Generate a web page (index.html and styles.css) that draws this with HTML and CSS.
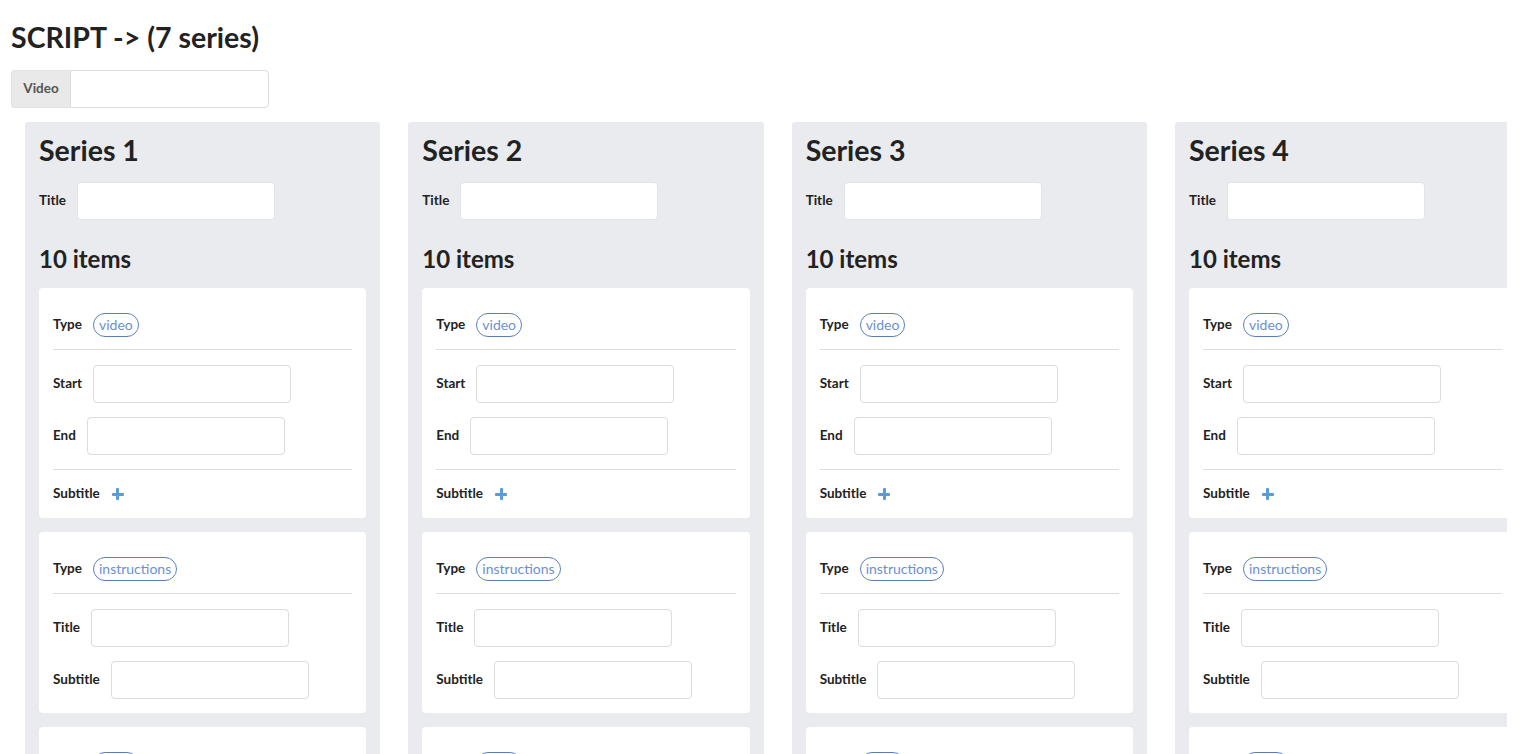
FILE: index.html
```html
<!DOCTYPE html>
<html lang="en">
<head>
<meta charset="utf-8">
<title>Script</title>
<link rel="stylesheet" href="styles.css">
</head>
<body>
<main class="page">
  <h1 class="page-title">SCRIPT -&gt; (7 series)</h1>
  <div class="input-group">
    <span class="addon">Video</span>
    <input class="text-input group-input" type="text">
  </div>

  <div class="series-scroll">
    <section class="series">
      <h2 class="series-title">Series 1</h2>
      <div class="field"><label class="label">Title</label><input class="text-input" type="text"></div>
      <h3 class="items-count">10 items</h3>
      <div class="card">
        <div class="type-row"><span class="label">Type</span><span class="pill">video</span></div>
        <div class="fields"><div class="field"><label class="label">Start</label><input class="text-input" type="text"></div><div class="field"><label class="label">End</label><input class="text-input" type="text"></div></div>
        <div class="sub-row"><span class="label">Subtitle</span><span class="plus"></span></div>
      </div>
      <div class="card">
        <div class="type-row"><span class="label">Type</span><span class="pill">instructions</span></div>
        <div class="fields last"><div class="field"><label class="label">Title</label><input class="text-input" type="text"></div><div class="field"><label class="label">Subtitle</label><input class="text-input" type="text"></div></div>
      </div>
      <div class="card">
        <div class="type-row"><span class="label">Type</span><span class="pill">video</span></div>
        <div class="fields"><div class="field"><label class="label">Start</label><input class="text-input" type="text"></div><div class="field"><label class="label">End</label><input class="text-input" type="text"></div></div>
        <div class="sub-row"><span class="label">Subtitle</span><span class="plus"></span></div>
      </div>
    </section>

    <section class="series">
      <h2 class="series-title">Series 2</h2>
      <div class="field"><label class="label">Title</label><input class="text-input" type="text"></div>
      <h3 class="items-count">10 items</h3>
      <div class="card">
        <div class="type-row"><span class="label">Type</span><span class="pill">video</span></div>
        <div class="fields"><div class="field"><label class="label">Start</label><input class="text-input" type="text"></div><div class="field"><label class="label">End</label><input class="text-input" type="text"></div></div>
        <div class="sub-row"><span class="label">Subtitle</span><span class="plus"></span></div>
      </div>
      <div class="card">
        <div class="type-row"><span class="label">Type</span><span class="pill">instructions</span></div>
        <div class="fields last"><div class="field"><label class="label">Title</label><input class="text-input" type="text"></div><div class="field"><label class="label">Subtitle</label><input class="text-input" type="text"></div></div>
      </div>
      <div class="card">
        <div class="type-row"><span class="label">Type</span><span class="pill">video</span></div>
        <div class="fields"><div class="field"><label class="label">Start</label><input class="text-input" type="text"></div><div class="field"><label class="label">End</label><input class="text-input" type="text"></div></div>
        <div class="sub-row"><span class="label">Subtitle</span><span class="plus"></span></div>
      </div>
    </section>

    <section class="series">
      <h2 class="series-title">Series 3</h2>
      <div class="field"><label class="label">Title</label><input class="text-input" type="text"></div>
      <h3 class="items-count">10 items</h3>
      <div class="card">
        <div class="type-row"><span class="label">Type</span><span class="pill">video</span></div>
        <div class="fields"><div class="field"><label class="label">Start</label><input class="text-input" type="text"></div><div class="field"><label class="label">End</label><input class="text-input" type="text"></div></div>
        <div class="sub-row"><span class="label">Subtitle</span><span class="plus"></span></div>
      </div>
      <div class="card">
        <div class="type-row"><span class="label">Type</span><span class="pill">instructions</span></div>
        <div class="fields last"><div class="field"><label class="label">Title</label><input class="text-input" type="text"></div><div class="field"><label class="label">Subtitle</label><input class="text-input" type="text"></div></div>
      </div>
      <div class="card">
        <div class="type-row"><span class="label">Type</span><span class="pill">video</span></div>
        <div class="fields"><div class="field"><label class="label">Start</label><input class="text-input" type="text"></div><div class="field"><label class="label">End</label><input class="text-input" type="text"></div></div>
        <div class="sub-row"><span class="label">Subtitle</span><span class="plus"></span></div>
      </div>
    </section>

    <section class="series">
      <h2 class="series-title">Series 4</h2>
      <div class="field"><label class="label">Title</label><input class="text-input" type="text"></div>
      <h3 class="items-count">10 items</h3>
      <div class="card">
        <div class="type-row"><span class="label">Type</span><span class="pill">video</span></div>
        <div class="fields"><div class="field"><label class="label">Start</label><input class="text-input" type="text"></div><div class="field"><label class="label">End</label><input class="text-input" type="text"></div></div>
        <div class="sub-row"><span class="label">Subtitle</span><span class="plus"></span></div>
      </div>
      <div class="card">
        <div class="type-row"><span class="label">Type</span><span class="pill">instructions</span></div>
        <div class="fields last"><div class="field"><label class="label">Title</label><input class="text-input" type="text"></div><div class="field"><label class="label">Subtitle</label><input class="text-input" type="text"></div></div>
      </div>
      <div class="card">
        <div class="type-row"><span class="label">Type</span><span class="pill">video</span></div>
        <div class="fields"><div class="field"><label class="label">Start</label><input class="text-input" type="text"></div><div class="field"><label class="label">End</label><input class="text-input" type="text"></div></div>
        <div class="sub-row"><span class="label">Subtitle</span><span class="plus"></span></div>
      </div>
    </section>

    <section class="series">
      <h2 class="series-title">Series 5</h2>
      <div class="field"><label class="label">Title</label><input class="text-input" type="text"></div>
      <h3 class="items-count">10 items</h3>
    </section>
  </div>
</main>
</body>
</html>
```

FILE: styles.css
```css
* { box-sizing: border-box; }

html, body {
  margin: 0;
  padding: 0;
  background: #ffffff;
  overflow: hidden;
}

body {
  font-family: "Lato", "Noto Sans", sans-serif;
  color: #222222;
}

.page {
  padding: 0 11px;
  height: 754px;
}

.page-title {
  margin: 0;
  padding-top: 22px;
  font-size: 28.5px;
  line-height: 30px;
  font-weight: 700;
  color: #222222;
}

.input-group {
  margin-top: 18px;
  display: flex;
  width: 258px;
  height: 38px;
}

.addon {
  display: flex;
  align-items: center;
  justify-content: center;
  width: 59px;
  padding-bottom: 3px;
  background: #e9e9e9;
  color: #555555;
  font-size: 13.5px;
  font-weight: 700;
  border: 1px solid #e2e2e2;
  border-right: none;
  border-radius: 4px 0 0 4px;
}

.text-input {
  width: 198px;
  height: 38px;
  border: 1px solid #dcdcdc;
  border-radius: 4px;
  background: #ffffff;
  font: inherit;
  outline: none;
}

.group-input {
  width: 199px;
  border-radius: 0 4px 4px 0;
}

.series-scroll {
  margin-top: 14px;
  padding-left: 14px;
  width: 1496px;
  display: flex;
  gap: 28px;
  overflow: hidden;
}

.series {
  flex: 0 0 355.33px;
  background: #e9ebee;
  border-radius: 3px;
  padding: 14px 14px 0;
  height: 640px;
}

.series-title {
  margin: 0;
  font-size: 28.5px;
  line-height: 28px;
  font-weight: 700;
  color: #222222;
}

.field {
  display: flex;
  align-items: center;
  gap: 11px;
}

.series > .field {
  margin-top: 18px;
}

.series > .field .text-input {
  border-color: #e3e4e7;
}

.label {
  font-size: 13.5px;
  font-weight: 700;
  color: #222222;
  padding-bottom: 2px;
}

.items-count {
  margin: 25px 0 0;
  font-size: 24px;
  line-height: 28px;
  font-weight: 700;
  color: #222222;
}

.card {
  background: #ffffff;
  border-radius: 4px;
  padding: 0 14px;
  margin-top: 14px;
}

.items-count + .card {
  margin-top: 15px;
}

.type-row {
  display: flex;
  align-items: center;
  gap: 11px;
  padding: 25px 0 12px;
  border-bottom: 1px solid #dcdcdc;
}

.pill {
  display: inline-flex;
  align-items: center;
  height: 24px;
  padding: 0 5px 1px;
  border: 1px solid #5a7fc0;
  border-radius: 12px;
  color: #6d8fd0;
  font-size: 14px;
  font-weight: 400;
}

.fields {
  display: flex;
  flex-direction: column;
  gap: 14px;
  padding: 15px 0 14px;
  border-bottom: 1px solid #dcdcdc;
}

.fields.last {
  border-bottom: none;
}

.sub-row {
  display: flex;
  align-items: center;
  gap: 12px;
  height: 48px;
}

.plus {
  position: relative;
  width: 12px;
  height: 12px;
}

.plus::before,
.plus::after {
  content: "";
  position: absolute;
  background: #5b9bd5;
  border-radius: 1px;
}

.plus::before {
  left: 0;
  top: 4.5px;
  width: 12px;
  height: 3px;
}

.plus::after {
  left: 4.5px;
  top: 0;
  width: 3px;
  height: 12px;
}
```
